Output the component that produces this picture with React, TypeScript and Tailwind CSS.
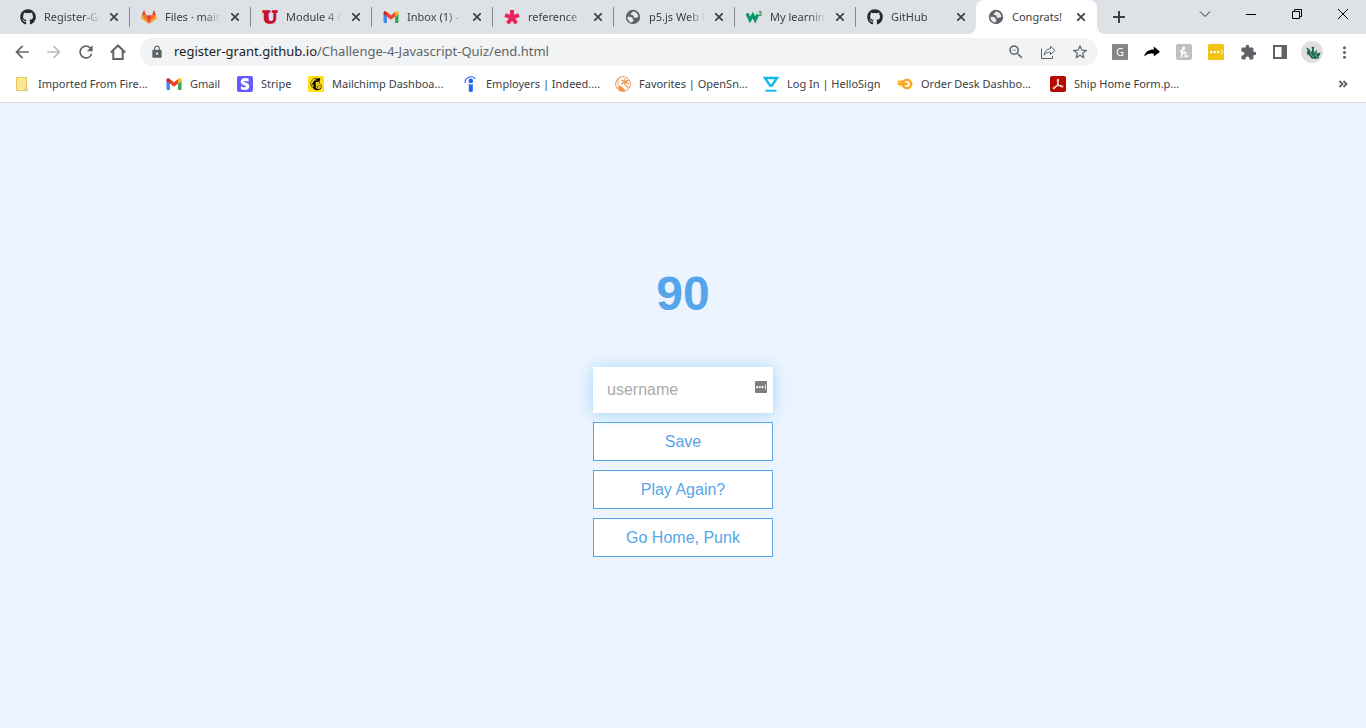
import React from "react";
import {
  MdArrowBack,
  MdArrowForward,
  MdExtension,
  MdLock,
  MdMoreVert,
  MdRefresh,
  MdStarBorder,
  MdZoomOut,
} from "react-icons/md";
import { FaGithub, FaMailchimp, FaStripeS } from "react-icons/fa";

function GitLabIcon() {
  return (
    <svg viewBox="0 0 16 16" className="size-4">
      <path d="M3 .8.9 6.5h4.2zM13 .8l2.1 5.7h-4.2z" fill="#e24329" />
      <path d="M5 6.2h6L8 15z" fill="#e24329" />
      <path d="M.9 6.2H5L8 15zM15.1 6.2H11L8 15z" fill="#fc6d26" />
      <path d="M.9 6.2.1 8.800c-.1.4 0 .7.3.9L8 15zM15.1 6.2l.8 2.600c.1.4 0 .7-.3.9L8 15z" fill="#fca326" />
    </svg>
  );
}

function UtahIcon() {
  return (
    <svg viewBox="0 0 16 16" className="size-4">
      <text
        x="8"
        y="14"
        textAnchor="middle"
        fontFamily="DejaVu Serif, serif"
        fontWeight="700"
        fontSize="17"
        fill="#c8102e"
        stroke="#c8102e"
        strokeWidth="1.600"
      >
        U
      </text>
    </svg>
  );
}

function GmailIcon() {
  return (
    <svg viewBox="0 0 16 16" className="size-4">
      <path d="M.5 5v8q0 1 1 1h2.400V7.400z" fill="#4285f4" />
      <path d="M12.100 14h2.400q1 0 1-1V5l-3.400 2.400z" fill="#34a853" />
      <path d="M12.100 3.200v4.400l3.400-2.400V4c0-1.700-1.700-2.300-2.700-1.300z" fill="#fbbc04" />
      <path d="M3.900 7.600V3L8 6.200 12.100 3v4.600L8 10.800z" fill="#ea4335" />
      <path d="M.5 4v1.300l3.400 2.300V3.200l-.7-.5C2.200 1.800.5 2.400.5 4z" fill="#c5221f" />
    </svg>
  );
}

function AsteriskIcon() {
  return (
    <svg viewBox="0 0 16 16" className="size-4" stroke="#ed225d" strokeWidth="4">
      <path d="M8 8.400V1M8 8.400l7-2.300M8 8.400l4.300 6M8 8.400l-4.300 6M8 8.400 1 6.100" />
    </svg>
  );
}

function GlobeIcon() {
  return (
    <svg viewBox="0 0 16 16" className="size-4">
      <circle cx="8" cy="8" r="7.200" fill="#5f6368" />
      <path
        d="M8.300 2.400c-1.600.2-.8 1.600-2 1.900-1.200.2-.7 1.500.3 1.600 1.700.1 2.300.7 2.100 1.900-.1 1 1 1.400 2 .9 1-.4 1.700-.1 2.700-.7-.1-2.500-2-5.200-5.100-5.600z"
        fill="#e8eaed"
      />
      <path
        d="M2.400 7.700c1.800 0 3.800-.2 4.700.9.700.8-.1 1.500 1.100 2 .8.400.4 1.500-.3 1.700-.6.200-.5.900-.6 1.300-2.700-.3-4.900-2.800-4.900-5.900z"
        fill="#e8eaed"
      />
    </svg>
  );
}

function W3Icon() {
  return (
    <svg viewBox="0 0 16 16" className="size-4">
      <path d="M1 4.500 4 11l2.800-5 2.400 5 2.600-5.500" fill="none" stroke="#059862" strokeWidth="3" />
      <text x="12" y="6.500" fontFamily="Liberation Sans, sans-serif" fontWeight="700" fontSize="7" fill="#059862">
        3
      </text>
    </svg>
  );
}

function FolderIcon() {
  return (
    <svg viewBox="0 0 16 16" className="size-4">
      <path d="M2.500 1.500h10v9h-.2l-1 1v3H2.500z" fill="#ffe694" stroke="#e9c65c" />
      <path d="M11.500 14.500v-3l1-1 1 1v3z" fill="#ffe694" stroke="#e9c65c" />
    </svg>
  );
}

function StripeIcon() {
  return (
    <span className="flex size-4 items-center justify-center rounded-[2px] bg-[#635bff] text-white">
      <FaStripeS size={12} />
    </span>
  );
}

function MailchimpIcon() {
  return (
    <span className="flex size-4 items-center justify-center rounded-[1px] bg-[#ffe01b] text-black">
      <FaMailchimp size={14} />
    </span>
  );
}

function IndeedIcon() {
  return (
    <svg viewBox="0 0 16 16" className="size-4">
      <path d="M3 6.500C3.300 1.300 9.500-.8 12.800 2.200" fill="none" stroke="#2164f3" strokeWidth="1.200" strokeLinecap="round" />
      <circle cx="8.800" cy="4.900" r="2.300" fill="#2164f3" />
      <path d="M6.800 8c1.200.6 2.800.6 4-.1V15q0 1-2 1t-2-1z" fill="#2164f3" />
    </svg>
  );
}

function OpenSnowIcon() {
  return (
    <svg viewBox="0 0 16 16" className="size-4" fill="none" stroke="#f0954a">
      <circle cx="8" cy="8" r="7.400" />
      <path d="M5.500.9C1.600 4.500 2 9 5.500 10.500L8.500 15" strokeWidth="1" />
      <path d="M3 11c3-.7 5.500.5 6.500 4L5 14.500z" fill="#f0954a" />
      <path d="M10 2.500v7M6.500 4.200l7 3.600M13.500 4.200l-7 3.600M11 9.500l2.500 2" strokeWidth="1.300" />
    </svg>
  );
}

function HelloSignIcon() {
  return (
    <svg viewBox="0 0 16 16" className="size-4" fill="none" stroke="#15b9ee">
      <path d="M2 2h12L9 9.500H7z" strokeWidth="2.400" />
      <path d="M2.500 14.700h11" strokeWidth="2" />
    </svg>
  );
}

function OrderDeskIcon() {
  return (
    <svg viewBox="0 0 16 16" className="size-4">
      <circle cx="10" cy="8" r="4.200" fill="none" stroke="#f9a51a" strokeWidth="2.500" />
      <path d="M1 4.500h5v1.500H1zM0 6.500h10.500v2.800H1.500z" fill="#f9a51a" />
      <path d="M2.500 9.800h3.500" stroke="#fbc667" />
    </svg>
  );
}

function AcrobatIcon() {
  return (
    <svg viewBox="0 0 16 16" className="size-4">
      <rect width="16" height="16" rx="2" fill="#b30b00" />
      <path
        d="M3.300 12.700c-1-.9.8-2.200 4-2.800 3.200-.6 5.600-.5 5.600.6 0 1.300-2.800.3-4.200-1.400C7.200 7.200 6.900 3 7.900 3c1.100 0 .6 3.500-.9 6.300-1.400 2.600-3 4-3.700 3.400z"
        fill="none"
        stroke="#fff"
        strokeWidth="1"
      />
    </svg>
  );
}

function HomeIcon() {
  return (
    <svg viewBox="0 0 16 16" className="size-4" fill="none" stroke="#5f6368" strokeWidth="2">
      <path d="M.8 8.500 8 1.500l7.200 7M3.300 7v8h9.400V7" />
    </svg>
  );
}

function ShareIcon() {
  return (
    <svg viewBox="0 0 16 16" className="size-4" fill="none" stroke="#5f6368" strokeWidth="1">
      <path d="M1.500 4.500v10h11V12" />
      <path d="M10.500 2.300 15 6.500l-4.500 4.100V8.200C7.500 8 5.500 9 4.200 11.200 4.500 7.500 6.500 5 10.500 4.700z" strokeLinejoin="round" />
    </svg>
  );
}

function ForwardArrowIcon() {
  return (
    <svg viewBox="0 0 16 16" className="size-4">
      <path d="M9.800 2.500 16 7.700l-6.200 4.800V9.800C6 9 3 9.800.2 12.500 1 8 5 5.500 9.800 5.600z" fill="#000" />
    </svg>
  );
}

function SidePanelIcon() {
  return (
    <svg viewBox="0 0 16 16" className="size-4">
      <path d="M1 1h14v14H1zM3 3v10h6.500V3z" fill="#5f6368" fillRule="evenodd" />
    </svg>
  );
}

function AvatarIcon() {
  return (
    <svg viewBox="0 0 22 22" className="size-[22px]">
      <circle cx="11" cy="11" r="11" fill="#dfdfdf" />
      <path
        d="M5 6.500 8.300 8l1.900 3.800L11 8.500 10.500 6l3-.5-.9 2.500.9 4 2-3.500.8 3.700 3.200-.7-.5 2.500-1.500 1.500 1 1.500-4.500 1-3.500-.5-3-4-1 1-.7-3.500 1-1z"
        fill="#1f6b4e"
      />
      <path d="m9 12 3.500 4.500M13.500 14l3 2M15 11l.5 3" stroke="#8fb5a5" strokeWidth=".8" />
    </svg>
  );
}

function PasswordIcon() {
  return (
    <svg viewBox="0 0 12 12" className="size-3">
      <rect width="12" height="12" rx="1" fill="#7f7f7f" />
      <path d="M1 5.200h2v1.800H1zM3.800 5.200h2v1.800h-2zM6.600 5.200h2v1.800h-2zM10 3.500h.8v5H10z" fill="#fff" />
    </svg>
  );
}

function CloseGlyph() {
  return (
    <svg viewBox="0 0 8 8" className="size-2" stroke="#3c4043" strokeWidth="1.700">
      <path d="m0 0 8 8M8 0 0 8" />
    </svg>
  );
}

type Tab = { title: string; icon: React.ReactNode };

const github = <FaGithub size={16} color="#24292f" />;

const tabs: Tab[] = [
  { title: "Register-Gr", icon: github },
  { title: "Files · main", icon: <GitLabIcon /> },
  { title: "Module 4 C", icon: <UtahIcon /> },
  { title: "Inbox (1) -", icon: <GmailIcon /> },
  { title: "reference |", icon: <AsteriskIcon /> },
  { title: "p5.js Web E", icon: <GlobeIcon /> },
  { title: "My learning", icon: <W3Icon /> },
  { title: "GitHub", icon: github },
];

function TabBody({ title, icon }: Tab) {
  return (
    <>
      <button className="flex min-w-0 flex-1 items-center gap-2">
        <span className="flex size-4 shrink-0 items-center justify-center">{icon}</span>
        <span className="min-w-0 flex-1 overflow-hidden mask-r-from-70% text-left whitespace-nowrap">{title}</span>
      </button>
      <button aria-label={`Close ${title}`} className="flex size-4 shrink-0 items-center justify-center">
        <CloseGlyph />
      </button>
    </>
  );
}

function TabStrip() {
  return (
    <div className="flex h-[34px] bg-[#dee1e6] pl-[9px] text-[11px] text-[#3c4043]">
      {tabs.map((tab, i) => (
        <div
          key={i}
          className="flex w-[121px] items-center after:h-5 after:w-px after:bg-[#86898d] nth-8:after:bg-transparent"
        >
          <div className="flex min-w-0 flex-1 items-center gap-1.5 pr-[7px] pl-[11px]">
            <TabBody {...tab} />
          </div>
        </div>
      ))}
      <div className="relative -ml-px flex w-[121px] items-center gap-1.5 rounded-t-lg bg-white pr-2 pl-3">
        <svg viewBox="0 0 8 8" className="absolute bottom-0 -left-2 size-2">
          <path d="M8 0v8H0a8 8 0 0 0 8-8z" fill="#fff" />
        </svg>
        <svg viewBox="0 0 8 8" className="absolute -right-2 bottom-0 size-2">
          <path d="M0 0v8h8a8 8 0 0 1-8-8z" fill="#fff" />
        </svg>
        <button className="flex min-w-0 flex-1 items-center gap-2">
          <span className="flex size-4 shrink-0 items-center justify-center"><GlobeIcon /></span>
          <span className="whitespace-nowrap">Congrats!</span>
        </button>
        <button aria-label="Close Congrats!" className="flex size-4 shrink-0 items-center justify-center">
          <CloseGlyph />
        </button>
      </div>
      <button aria-label="New tab" className="ml-2 flex w-7 items-center justify-center">
        <svg viewBox="0 0 12 12" className="size-3" stroke="#3c4043" strokeWidth="2">
          <path d="M6 0v12M0 6h12" />
        </svg>
      </button>
      <div className="ml-auto flex h-7 *:flex *:w-[46px] *:items-center *:justify-center">
        <button aria-label="Search tabs">
          <svg viewBox="0 0 12 12" className="size-3" fill="none" stroke="#222">
            <path d="m1 3.500 5 5 5-5" />
          </svg>
        </button>
        <button aria-label="Minimize">
          <svg viewBox="0 0 10 10" className="size-2.5" stroke="#000">
            <path d="M0 5.500h10" />
          </svg>
        </button>
        <button aria-label="Restore">
          <svg viewBox="0 0 10 10" className="size-2.5" fill="none" stroke="#000">
            <path d="M.5 2.500h7v7h-7zM2.500 2.500v-2h7v7h-2" />
          </svg>
        </button>
        <button aria-label="Close window">
          <svg viewBox="0 0 10 10" className="size-2.5" stroke="#000">
            <path d="m0 0 10 10M10 0 0 10" />
          </svg>
        </button>
      </div>
    </div>
  );
}

function Toolbar() {
  return (
    <div className="flex h-9 items-center gap-1.5 px-1.5 text-[#5f6368]">
      <div className="flex *:flex *:size-8 *:items-center *:justify-center">
        <button aria-label="Back"><MdArrowBack size={20} /></button>
        <button aria-label="Forward" className="text-[#bababc]"><MdArrowForward size={20} /></button>
        <button aria-label="Reload"><MdRefresh size={20} /></button>
        <button aria-label="Home"><HomeIcon /></button>
      </div>
      <div className="relative flex h-7 min-w-0 flex-1 items-center rounded-full bg-[#f1f3f4] pr-0.5 pl-2.5">
        <MdLock size={14} className="mr-2.5 shrink-0" />
        <input
          aria-label="Address"
          defaultValue="register-grant.github.io/Challenge-4-Javascript-Quiz/end.html"
          className="min-w-0 flex-1 bg-transparent text-[13px] text-transparent caret-black outline-none"
        />
        <span aria-hidden="true" className="pointer-events-none absolute left-[34px] text-[13px] whitespace-nowrap">
          <span className="text-[#202124]">register-grant.github.io</span>/Challenge-4-Javascript-Quiz/end.html
        </span>
        <div className="flex *:flex *:h-7 *:w-8 *:items-center *:justify-center">
          <button aria-label="Zoom"><MdZoomOut size={18} /></button>
          <button aria-label="Share"><ShareIcon /></button>
          <button aria-label="Bookmark"><MdStarBorder size={18} /></button>
        </div>
      </div>
      <div className="flex *:flex *:size-8 *:items-center *:justify-center">
        <button aria-label="Grammar">
          <span className="flex size-4 items-center justify-center rounded-[1px] bg-[#858585] text-[11px] text-white">G</span>
        </button>
        <button aria-label="Forward page"><ForwardArrowIcon /></button>
        <button aria-label="Coupons">
          <svg viewBox="0 0 16 16" className="size-4" fill="none" stroke="#fff" strokeLinecap="round">
            <rect width="16" height="16" rx="2" fill="#c0c0c0" stroke="none" />
            <path d="M4.500 7C7 6.500 9 4.500 8.200 3.300 7 2.300 6 6 5.500 13M5.800 10.500C7 8 9.800 7.500 9.700 9c-.1 1.500-1.200 3.500.2 3.800.8.100 1.300-.4 1.800-1" strokeWidth="1.500" />
          </svg>
        </button>
        <button aria-label="Passwords">
          <svg viewBox="0 0 16 16" className="size-4">
            <rect width="16" height="16" rx="1.500" fill="#f2c112" />
            <path d="M2 7h2.300v2.300H2zM5.500 7h2.300v2.300H5.500zM9 7h2.300v2.300H9zM13.500 5.500h1v5h-1z" fill="#fff" />
          </svg>
        </button>
        <button aria-label="Extensions"><MdExtension size={17} /></button>
        <button aria-label="Side panel"><SidePanelIcon /></button>
        <button aria-label="Profile"><AvatarIcon /></button>
        <button aria-label="Menu"><MdMoreVert size={19} /></button>
      </div>
    </div>
  );
}

const bookmarks = [
  { label: "Imported From Fire...", icon: <FolderIcon />, width: "w-[152px]" },
  { label: "Gmail", icon: <GmailIcon />, width: "w-[71px]" },
  { label: "Stripe", icon: <StripeIcon />, width: "w-[71px]" },
  { label: "Mailchimp Dashboa...", icon: <MailchimpIcon />, width: "w-[154px]" },
  { label: "Employers | Indeed....", icon: <IndeedIcon />, width: "w-[153px]" },
  { label: "Favorites | OpenSn...", icon: <OpenSnowIcon />, width: "w-[148px]" },
  { label: "Log In | HelloSign", icon: <HelloSignIcon />, width: "w-[134px]" },
  { label: "Order Desk Dashbo...", icon: <OrderDeskIcon />, width: "w-[153px]" },
  { label: "Ship Home Form.p...", icon: <AcrobatIcon />, width: "w-[153px]" },
];

function BookmarksBar() {
  return (
    <nav className="flex h-7 items-center pr-[18px] pl-3.5 text-[11px] text-[#3c4043]">
      {bookmarks.map((b) => (
        <a key={b.label} href="#" className={`flex shrink-0 items-center gap-2 whitespace-nowrap ${b.width}`}>
          <span className="shrink-0">{b.icon}</span>
          {b.label}
        </a>
      ))}
      <button aria-label="More bookmarks" className="ml-auto">
        <svg viewBox="0 0 10 8" className="h-2 w-2.5" fill="none" stroke="#5f6368" strokeWidth="1.800">
          <path d="m1.500 1 3 3-3 3M5.500 1l3 3-3 3" />
        </svg>
      </button>
    </nav>
  );
}

const buttonStyle =
  "flex h-[39px] items-center justify-center border border-[#56a5eb] bg-white text-base text-[#56a5eb]";

export default function App() {
  return (
    <div className="flex min-h-screen flex-col bg-[#ecf4ff]">
      <header className="border-b border-[#dadce0] bg-white pb-1 font-['Noto_Sans',sans-serif]">
        <TabStrip />
        <Toolbar />
        <BookmarksBar />
      </header>
      <main className="flex flex-1 flex-col items-center justify-center font-['Liberation_Sans',Arial,sans-serif]">
        <h1 className="mb-[44px] text-5xl leading-[58px] font-bold text-[#56a5eb]">90</h1>
        <form className="mb-[9px] flex w-[180px] flex-col gap-[9px]" onSubmit={(e) => e.preventDefault()}>
          <div className="relative flex">
            <input
              type="text"
              aria-label="username"
              placeholder="username"
              className="h-[46px] w-full bg-white px-3.5 text-base shadow-[0_1px_14px_0_rgba(86,185,235,0.5)] outline-none placeholder:text-[#aaaaaa]"
            />
            <span className="pointer-events-none absolute top-3.5 right-1.5">
              <PasswordIcon />
            </span>
          </div>
          <button type="submit" className={buttonStyle}>Save</button>
          <a href="#" className={buttonStyle}>Play Again?</a>
          <a href="#" className={buttonStyle}>Go Home, Punk</a>
        </form>
      </main>
    </div>
  );
}
